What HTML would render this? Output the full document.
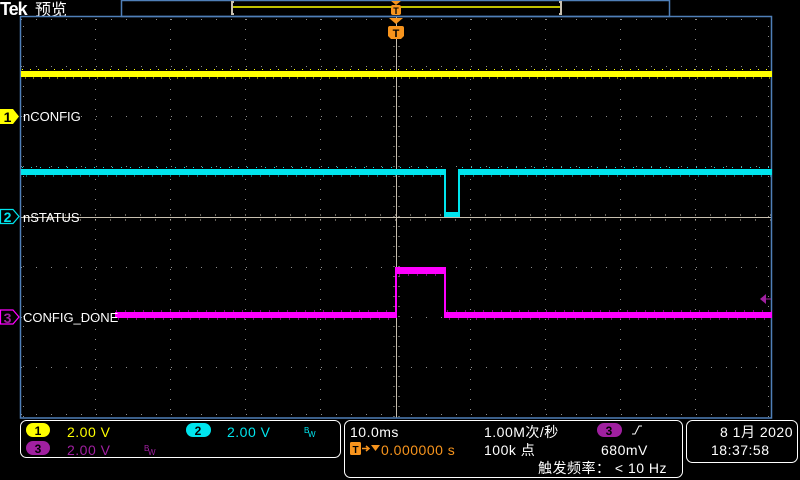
<!DOCTYPE html>
<html><head><meta charset="utf-8"><style>
html,body{margin:0;padding:0;background:#000;width:800px;height:480px;overflow:hidden}
svg{display:block}
text{font-family:"Liberation Sans","Noto Sans CJK SC",sans-serif}
.b{font-size:14px;letter-spacing:0.5px}
</style></head><body>
<svg width="800" height="480" viewBox="0 0 800 480" xmlns="http://www.w3.org/2000/svg">
<rect width="800" height="480" fill="#000"/>
<text x="0" y="15" fill="#fff" font-size="18" font-weight="bold" letter-spacing="-1">Tek</text>
<text x="35" y="15" fill="#fff" font-size="16">预览</text>
<rect x="121.5" y="0.5" width="548" height="16" fill="none" stroke="#4f7fb8" stroke-width="1.5"/>
<line x1="233" y1="7" x2="562" y2="7" stroke="#ffff00" stroke-width="1.5"/>
<rect x="231" y="1" width="2" height="14" fill="#c8c0b0"/>
<rect x="560" y="1" width="2" height="14" fill="#c8c0b0"/>
<rect x="231" y="1" width="3" height="2" fill="#c8c0b0"/><rect x="231" y="13" width="3" height="2" fill="#c8c0b0"/>
<rect x="559" y="1" width="3" height="2" fill="#c8c0b0"/><rect x="559" y="13" width="3" height="2" fill="#c8c0b0"/>
<polygon points="391,1 401,1 396,5" fill="#f7941d"/>
<rect x="391" y="5" width="10" height="10" rx="2" fill="#f7941d"/>
<text x="396" y="14" fill="#000" font-size="9" font-weight="bold" text-anchor="middle">T</text>
<g stroke="#8a8a8a" stroke-width="1">
<g stroke-dasharray="1 9">
<line x1="95.5" y1="19" x2="95.5" y2="418"/><line x1="170.5" y1="19" x2="170.5" y2="418"/>
<line x1="245.5" y1="19" x2="245.5" y2="418"/><line x1="320.5" y1="19" x2="320.5" y2="418"/>
<line x1="470.5" y1="19" x2="470.5" y2="418"/><line x1="545.5" y1="19" x2="545.5" y2="418"/>
<line x1="620.5" y1="19" x2="620.5" y2="418"/><line x1="695.5" y1="19" x2="695.5" y2="418"/>
</g>
<g stroke-dasharray="1 14">
<line x1="21" y1="66.5" x2="772" y2="66.5"/><line x1="21" y1="116.5" x2="772" y2="116.5"/>
<line x1="21" y1="166.5" x2="772" y2="166.5"/><line x1="21" y1="267.5" x2="772" y2="267.5"/>
<line x1="21" y1="317.5" x2="772" y2="317.5"/><line x1="21" y1="367.5" x2="772" y2="367.5"/>
</g>
<g stroke-dasharray="1 14"><line x1="21" y1="19.5" x2="772" y2="19.5"/><line x1="21" y1="414.5" x2="772" y2="414.5"/></g>
<g stroke-dasharray="1 9"><line x1="23.5" y1="26" x2="23.5" y2="418"/><line x1="768.5" y1="26" x2="768.5" y2="418"/></g>
</g>
<line x1="396.5" y1="16" x2="396.5" y2="418" stroke="#c8c0b0" stroke-width="1"/>
<line x1="20" y1="217.5" x2="772" y2="217.5" stroke="#c8c0b0" stroke-width="1"/>
<g stroke="#c8c0b0" stroke-dasharray="1 14"><line x1="20" y1="215" x2="772" y2="215"/><line x1="20" y1="220" x2="772" y2="220"/></g>
<g stroke="#c8c0b0" stroke-dasharray="1 9"><line x1="394" y1="16" x2="394" y2="418"/><line x1="399" y1="16" x2="399" y2="418"/></g>
<rect x="20.5" y="16.5" width="751" height="401.5" fill="none" stroke="#4f7fb8" stroke-width="1.5"/>
<polygon points="389,18 403,18 396,24" fill="#f7941d"/>
<path d="M390,26 h12 a2,2 0 0 1 2,2 v8 l-3,3 h-10 l-3,-3 v-8 a2,2 0 0 1 2,-2z" fill="#f7941d"/>
<text x="396" y="37" fill="#000" font-size="11" font-weight="bold" text-anchor="middle">T</text>
<rect x="21" y="71" width="751" height="6" fill="#ffff00"/>
<g stroke="#ffff00" stroke-width="1" stroke-dasharray="1 7"><line x1="22" y1="69.5" x2="772" y2="69.5"/><line x1="25" y1="78" x2="772" y2="78"/></g>
<rect x="21" y="169" width="423" height="6" fill="#00e5ee"/>
<rect x="444" y="169" width="2" height="48" fill="#00e5ee"/>
<rect x="444" y="212" width="16" height="5" fill="#00e5ee"/>
<rect x="458" y="169" width="2" height="48" fill="#00e5ee"/>
<rect x="460" y="169" width="312" height="6" fill="#00e5ee"/>
<g stroke="#00e5ee" stroke-dasharray="1 8"><line x1="22" y1="167.5" x2="444" y2="167.5"/><line x1="462" y1="167.5" x2="772" y2="167.5"/><line x1="26" y1="176" x2="444" y2="176"/><line x1="464" y1="176" x2="772" y2="176"/></g>
<rect x="115" y="312" width="281" height="6" fill="#ff00ff"/>
<rect x="395" y="267" width="2" height="51" fill="#ff00ff"/>
<rect x="397" y="267" width="48" height="7" fill="#ff00ff"/>
<rect x="444" y="267" width="2" height="51" fill="#ff00ff"/>
<rect x="446" y="312" width="326" height="6" fill="#ff00ff"/>
<g stroke="#ff00ff" stroke-dasharray="1 8"><line x1="116" y1="311" x2="396" y2="311"/><line x1="447" y1="311" x2="772" y2="311"/><line x1="118" y1="319" x2="396" y2="319"/><line x1="449" y1="319" x2="772" y2="319"/><line x1="399" y1="275" x2="444" y2="275"/></g>
<polygon points="760,299 766,294 766,304" fill="#a020a0"/><line x1="765" y1="299" x2="771" y2="299" stroke="#a020a0"/>
<path d="M0,109 h13 l6,7.5 l-6,7.5 h-13z" fill="#ffff00"/>
<text x="7.5" y="122" fill="#000" font-size="14" font-weight="bold" text-anchor="middle">1</text>
<path d="M0.5,209.5 h12.5 l6,7 l-6,7 h-12.5z" fill="#000" stroke="#00e5ee" stroke-width="1.2"/>
<text x="7.5" y="222" fill="#00e5ee" font-size="14" font-weight="bold" text-anchor="middle">2</text>
<path d="M0.5,310 h12.5 l6,7 l-6,7 h-12.5z" fill="#000" stroke="#ff00ff" stroke-width="1.2"/>
<text x="7.5" y="323" fill="#a020a0" font-size="14" font-weight="bold" text-anchor="middle">3</text>
<g fill="#fff" font-size="13"><text x="23" y="121">nCONFIG</text><text x="23" y="222">nSTATUS</text><text x="23" y="322">CONFIG_DONE</text></g>
<rect x="20.5" y="420.5" width="320" height="37" rx="6" fill="none" stroke="#fff" stroke-width="1"/>
<rect x="26" y="423" width="24" height="14" rx="7" fill="#ffff00"/><text x="38" y="435" fill="#000" font-size="12" font-weight="bold" text-anchor="middle">1</text>
<text class="b" x="67" y="437" fill="#ffff00">2.00 V</text>
<rect x="186" y="423" width="25" height="14" rx="7" fill="#00e5ee"/><text x="198" y="435" fill="#000" font-size="12" font-weight="bold" text-anchor="middle">2</text>
<text class="b" x="227" y="437" fill="#00e5ee">2.00 V</text>
<text x="304" y="433" fill="#00e5ee" font-size="8">B</text><text x="308" y="437" fill="#00e5ee" font-size="8">W</text>
<rect x="26" y="441" width="24" height="14" rx="7" fill="#a020a0"/><text x="38" y="453" fill="#000" font-size="12" font-weight="bold" text-anchor="middle">3</text>
<text class="b" x="67" y="455" fill="#a020a0">2.00 V</text>
<text x="144" y="451" fill="#a020a0" font-size="8">B</text><text x="148" y="455" fill="#a020a0" font-size="8">W</text>
<rect x="344.5" y="420.5" width="338" height="57" rx="6" fill="none" stroke="#fff" stroke-width="1"/>
<text class="b" x="350" y="437" fill="#fff">10.0ms</text>
<rect x="350" y="442" width="11" height="13" rx="1.5" fill="#f7941d"/><text x="355.5" y="453" fill="#000" font-size="10" font-weight="bold" text-anchor="middle">T</text>
<path d="M362,448.5 h7 M366,446 l3,2.5 l-3,2.5" stroke="#f7941d" fill="none" stroke-width="1.5"/>
<polygon points="371,445 380,445 375.5,451" fill="#f7941d"/>
<text class="b" x="381" y="455" fill="#f7941d">0.000000 s</text>
<text class="b" x="484" y="437" fill="#fff">1.00M次/秒</text>
<text class="b" x="484" y="455" fill="#fff">100k 点</text>
<rect x="597" y="423" width="25" height="14" rx="7" fill="#a020a0"/><text x="609" y="435" fill="#000" font-size="12" font-weight="bold" text-anchor="middle">3</text>
<path d="M632,434 h3 l4,-8 h3" stroke="#fff" fill="none" stroke-width="1"/>
<text class="b" x="601" y="455" fill="#fff">680mV</text>
<text class="b" x="538" y="473" fill="#fff">触发频率： &lt; 10 Hz</text>
<rect x="686.5" y="420.5" width="111" height="42" rx="6" fill="none" stroke="#fff" stroke-width="1"/>
<text class="b" x="793" y="437" fill="#fff" text-anchor="end">8 1月 2020</text>
<text class="b" x="711" y="455" fill="#fff">18:37:58</text>
</svg>
</body></html>
